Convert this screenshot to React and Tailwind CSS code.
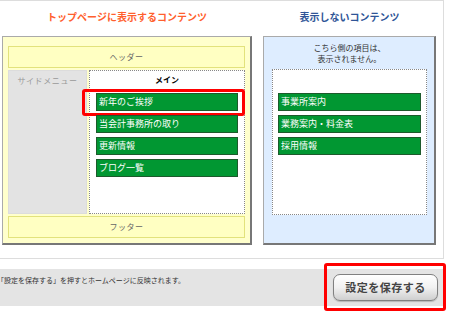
import React from "react";

const shown = ["新年のご挨拶", "当会計事務所の取り", "更新情報", "ブログ一覧"];
const hidden = ["事業所案内", "業務案内・料金表", "採用情報"];

const Item = ({ label, marked }) => (
  <div className="relative h-[18px] bg-[#019732] border border-[#1d5a2c] pl-[2px] text-[9px] leading-[16px] text-white whitespace-nowrap">
    {label}
    {marked && (
      <div className="absolute -left-[15px] -right-[8px] -top-[5px] -bottom-[6px] border-[3px] border-[#ff0000] rounded-[3px]" />
    )}
  </div>
);

const App = () => {
  return (
    <div className="w-[450px] h-[319px] bg-white overflow-hidden font-['Noto_Sans_CJK_JP',sans-serif]">
      <div className="w-[444px] h-[259px] border-t border-r border-b border-[#dddddd] flex gap-[11px] pl-[2px]">
        {/* left column */}
        <div className="w-[250px] flex flex-col">
          <div className="h-[35px] pt-[10px] text-center text-[10px] leading-[12px] font-bold text-[#ff5f2e]">
            トップページに表示するコンテンツ
          </div>
          <div className="h-[209px] bg-[#ffffcc] border-l border-t border-[#aaaaaa] border-r-2 border-b-2 border-r-[#777777] border-b-[#777777] pt-[9px] px-[5px] flex flex-col gap-[2px]">
            <div className="h-[22px] bg-[#ffffc2] border border-[#e2e27c] flex items-center justify-center text-[8px] tracking-[0.5px] text-[#666666]">
              ヘッダー
            </div>
            <div className="h-[144px] flex gap-[2px]">
              <div className="w-[79px] bg-[#e3e3e3] border border-[#dcdcdc] pt-[4px] text-center text-[8px] leading-[12px] tracking-[0.6px] text-[#999999]">
                サイドメニュー
              </div>
              <div className="flex-1 bg-white border border-dotted border-[#888888] px-[6px]">
                <div className="h-[22px] pt-[3px] text-center text-[8px] leading-[12px] font-bold text-black">
                  メイン
                </div>
                <div className="flex flex-col gap-[4px]">
                  {shown.map((s, i) => (
                    <Item key={s} label={s} marked={i === 0} />
                  ))}
                </div>
              </div>
            </div>
            <div className="h-[22px] bg-[#ffffc2] border border-[#e2e27c] flex items-center justify-center text-[8px] tracking-[0.5px] text-[#666666]">
              フッター
            </div>
          </div>
        </div>

        {/* right column */}
        <div className="w-[173px] flex flex-col">
          <div className="h-[35px] pt-[10px] text-center text-[10px] leading-[12px] font-bold text-[#2f5597]">
            表示しないコンテンツ
          </div>
          <div className="h-[209px] bg-[#deedff] border-l border-t border-[#aaaaaa] border-r-2 border-b-2 border-r-[#777777] border-b-[#777777] pt-[5px] pl-[8px] pr-[7px]">
            <div className="text-center text-[8px] leading-[11px] text-[#333333]">
              こちら側の項目は、
              <br />
              表示されません。
            </div>
            <div className="mt-[5px] h-[146px] bg-white border border-dotted border-[#888888] pt-[23px] px-[5px] flex flex-col gap-[4px]">
              {hidden.map((s) => (
                <Item key={s} label={s} />
              ))}
            </div>
          </div>
        </div>
      </div>

      {/* save bar */}
      <div className="mt-[10px] w-[445px] h-[37px] bg-[#e4e4e4] flex items-start">
        <div className="flex-1 ml-[-3px] pt-[6px] text-[7px] leading-[11px] text-[#333333] whitespace-nowrap">
          「設定を保存する」を押すとホームページに反映されます。
        </div>
        <div className="mt-[-6px] mr-[-1px] w-[122px] h-[48px] border-[3px] border-[#ff0000] rounded-[3px] pl-[6px] pt-[7px]">
          <button className="w-[105px] h-[27px] rounded-[7px] border border-[#808080] bg-linear-to-b from-white via-[#f1f1f1] to-[#cfcfcf] shadow-[0_1px_1px_rgba(0,0,0,0.2)] text-[11px] font-bold tracking-[0.5px] text-[#444444]">
            設定を保存する
          </button>
        </div>
      </div>
    </div>
  );
};

export default App;
